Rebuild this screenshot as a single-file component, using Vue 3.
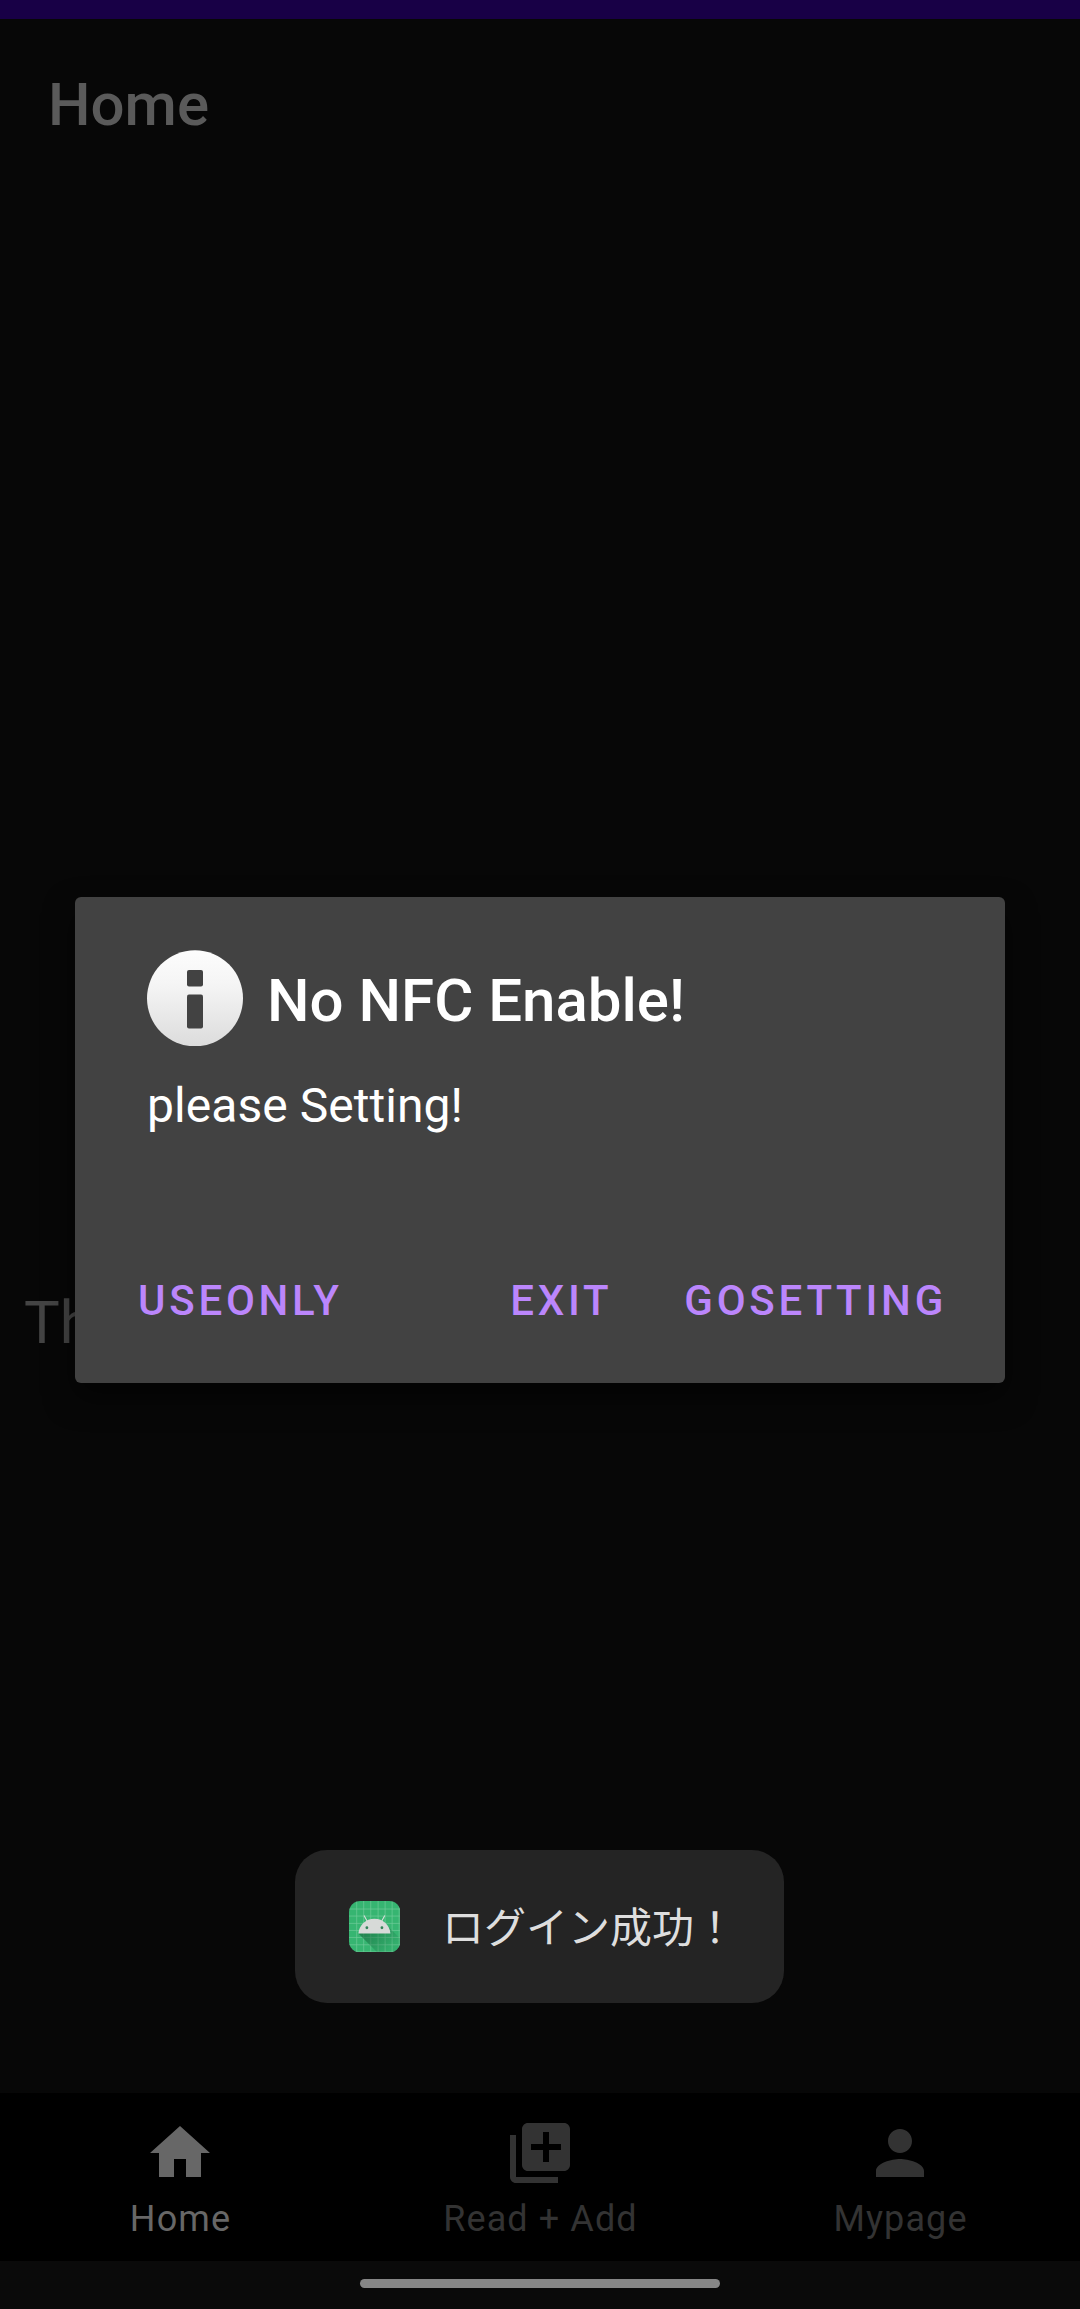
<script setup>
const tabs = [
  { label: 'Home', active: true, path: 'M10 20v-6h4v6h5v-8h3L12 3 2 12h3v8z' },
  {
    label: 'Read + Add',
    active: false,
    path: 'M4 6H2v14c0 1.1.9 2 2 2h14v-2H4V6zm16-4H8c-1.1 0-2 .9-2 2v12c0 1.1.9 2 2 2h12c1.1 0 2-.9 2-2V4c0-1.1-.9-2-2-2zm-1 9h-4v4h-2v-4H9V9h4V5h2v4h4v2z',
  },
  {
    label: 'Mypage',
    active: false,
    path: 'M12 12c2.21 0 4-1.79 4-4s-1.79-4-4-4-4 1.79-4 4 1.79 4 4 4zm0 2c-2.67 0-8 1.34-8 4v2h16v-2c0-2.66-5.33-4-8-4z',
  },
]
const gridX = [23, 44, 65, 87, 108, 129, 150]
const gridY = [24, 45, 67, 88, 109, 131, 152]
</script>

<template>
  <div class="screen">
    <div class="status-bar"></div>
    <header class="app-bar"><h1>Home</h1></header>
    <main class="content"><p>Th</p></main>
    <nav class="tabs">
      <div v-for="tab in tabs" :key="tab.label" class="tab" :class="{ active: tab.active }">
        <svg viewBox="0 0 24 24"><path :d="tab.path" /></svg>
        <span>{{ tab.label }}</span>
      </div>
    </nav>
    <div class="gesture-bar"><div class="handle"></div></div>

    <section class="dialog" role="dialog">
      <div class="dialog-head">
        <svg class="info" viewBox="0 0 96 96">
          <defs>
            <linearGradient id="info-fill" x1="0" y1="0" x2="0" y2="1">
              <stop offset="0" stop-color="#fdfdfd" />
              <stop offset="0.35" stop-color="#f5f5f5" />
              <stop offset="1" stop-color="#dcdcdc" />
            </linearGradient>
          </defs>
          <circle cx="48" cy="48.3" r="48" fill="url(#info-fill)" />
          <rect x="40" y="20" width="16" height="16.5" rx="2" fill="#424242" />
          <rect x="40" y="44.5" width="16" height="34" rx="2" fill="#424242" />
        </svg>
        <h2>No NFC Enable!</h2>
      </div>
      <p class="message">please Setting!</p>
      <div class="actions">
        <button>USEONLY</button>
        <span class="spacer"></span>
        <button class="exit">EXIT</button>
        <button>GOSETTING</button>
      </div>
    </section>

    <aside class="toast">
      <svg class="app-icon" viewBox="0 0 154 154">
        <defs>
          <clipPath id="icon-shape"><rect width="154" height="154" rx="34" /></clipPath>
          <linearGradient id="icon-shadow" gradientUnits="userSpaceOnUse" x1="60" y1="90" x2="115" y2="150">
            <stop offset="0" stop-color="#14683c" stop-opacity="0.6" />
            <stop offset="1" stop-color="#14683c" stop-opacity="0.08" />
          </linearGradient>
        </defs>
        <g clip-path="url(#icon-shape)">
          <rect width="154" height="154" fill="#36b571" />
          <g stroke="#72cc9b" stroke-width="2">
            <line v-for="x in gridX" :key="'x' + x" :x1="x" :x2="x" y1="0" y2="154" />
            <line v-for="y in gridY" :key="'y' + y" x1="0" x2="154" :y1="y" :y2="y" />
          </g>
          <path d="M28 97 L85 154 H154 V113 L120 79 Z" fill="url(#icon-shadow)" />
          <path d="M45 43 L54 60 M107 43 L98 60" stroke="#d8dfdb" stroke-width="3.2" />
          <path d="M28 97 C30 72 50 53 76 53 S122 72 124 97 Z" fill="#d7dad8" />
          <circle cx="53.5" cy="80" r="4.2" fill="#34845a" />
          <circle cx="98.5" cy="80" r="4.2" fill="#34845a" />
        </g>
      </svg>
      <span>ログイン成功！</span>
    </aside>
  </div>
</template>

<style>
body {
  background: #070707;
}
</style>

<style scoped>
.screen {
  position: relative;
  display: flex;
  flex-direction: column;
  width: 1080px;
  height: 2309px;
  overflow: hidden;
  background: #070707;
  font-family: Roboto, "Noto Sans CJK JP", sans-serif;
}
h1,
h2,
p {
  margin: 0;
}
.status-bar {
  height: 18.5px;
  background: #180046;
}
.app-bar {
  display: flex;
  align-items: center;
  height: 172.5px;
  padding: 0 48px;
}
h1 {
  font-size: 60px;
  font-weight: 500;
  line-height: 70px;
  color: #5a5a5a;
}
.content {
  flex: 1;
  padding: 1097px 24px 0;
}
.content p {
  font-size: 60px;
  line-height: 70px;
  color: #444;
}
.tabs {
  display: flex;
  height: 168px;
  background: #000;
}
.tab {
  flex: 1;
  display: flex;
  flex-direction: column;
  align-items: center;
  padding-top: 24px;
  color: #333;
}
.tab.active {
  color: #676767;
}
.tab svg {
  width: 72px;
  height: 72px;
  fill: currentColor;
}
.tab span {
  margin: 9px 0 0 1px;
  font-size: 36px;
  line-height: 42px;
  letter-spacing: 1.1px;
}
.gesture-bar {
  display: flex;
  justify-content: center;
  height: 30.5px;
  padding-top: 17.5px;
  box-sizing: content-box;
  background: #0a0a0a;
}
.handle {
  width: 360px;
  height: 9px;
  border-radius: 5px;
  background: #868686;
}
.dialog {
  position: absolute;
  left: 75px;
  top: 896.5px;
  width: 930px;
  height: 486.5px;
  box-sizing: border-box;
  padding: 53.5px 34px 0 72px;
  border-radius: 6px;
  background: #424242;
  box-shadow: 0 14px 30px rgba(0, 0, 0, 0.5);
  color: #fff;
}
.dialog-head {
  display: flex;
  gap: 24px;
}
.info {
  width: 96px;
  height: 96px;
}
h2 {
  padding-top: 16px;
  font-size: 60px;
  font-weight: 500;
  line-height: 70px;
}
.message {
  margin-top: 32px;
  font-size: 48px;
  line-height: 56px;
  letter-spacing: 0.05px;
}
.actions {
  display: flex;
  align-items: center;
  height: 108px;
  margin: 113px 0 0 -33px;
}
.spacer {
  flex: 1;
}
button {
  padding: 0 24px;
  border: 0;
  background: none;
  font: 500 42px/50px Roboto, sans-serif;
  letter-spacing: 3.75px;
  color: #bb86fc;
}
.exit {
  margin-right: 24px;
}
.toast {
  position: absolute;
  left: 295px;
  top: 1850px;
  width: 489px;
  height: 152.5px;
  box-sizing: border-box;
  display: flex;
  align-items: center;
  padding-left: 53.5px;
  border-radius: 32px;
  background: #242424;
  font-family: "Noto Sans CJK JP", sans-serif;
  font-size: 42px;
  line-height: 60px;
  color: #dedede;
}
.app-icon {
  width: 51.5px;
  height: 51.5px;
  margin-right: 42px;
}
.toast span {
  margin-bottom: 2px;
  white-space: nowrap;
}
</style>
